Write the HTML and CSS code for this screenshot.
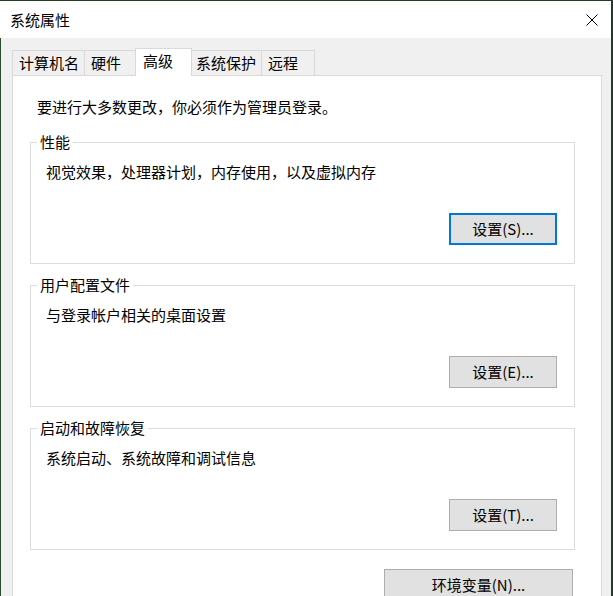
FILE: index.html
```html
<!DOCTYPE html>
<html lang="zh-CN">
<head>
<meta charset="utf-8">
<title>系统属性</title>
<link rel="stylesheet" href="styles.css">
</head>
<body>
<div class="window">
  <div class="titlebar">
    <span class="title">系统属性</span>
    <span class="close" aria-label="关闭">
      <svg width="12" height="12" viewBox="0 0 12 12"><path d="M0.5 0.5 L11.5 11.5 M11.5 0.5 L0.5 11.5" stroke="#000" stroke-width="1" fill="none"/></svg>
    </span>
  </div>
  <div class="client">
    <div class="tabs">
      <div class="tab">计算机名</div>
      <div class="tab">硬件</div>
      <div class="tab selected">高级</div>
      <div class="tab">系统保护</div>
      <div class="tab">远程</div>
    </div>
    <div class="panel">
      <p class="intro">要进行大多数更改，你必须作为管理员登录。</p>
      <fieldset class="group">
        <legend>性能</legend>
        <p class="desc">视觉效果，处理器计划，内存使用，以及虚拟内存</p>
        <div class="actions"><button class="btn focused">设置(S)...</button></div>
      </fieldset>
      <fieldset class="group">
        <legend>用户配置文件</legend>
        <p class="desc">与登录帐户相关的桌面设置</p>
        <div class="actions"><button class="btn">设置(E)...</button></div>
      </fieldset>
      <fieldset class="group">
        <legend>启动和故障恢复</legend>
        <p class="desc">系统启动、系统故障和调试信息</p>
        <div class="actions"><button class="btn">设置(T)...</button></div>
      </fieldset>
      <div class="env-row"><button class="btn wide">环境变量(N)...</button></div>
    </div>
  </div>
</div>
</body>
</html>
```
FILE: styles.css
```css
* { box-sizing: border-box; }
html, body {
  margin: 0;
  padding: 0;
  height: 100%;
  overflow: hidden;
}
body {
  background: #213d24;
  font-family: "Noto Sans CJK SC", "Noto Sans", sans-serif;
  font-size: 15px;
  color: #000;
}
.window {
  margin: 1px 2px 0 0;
  height: 595px;
  overflow: hidden;
  background: #f0f0f0;
  display: flex;
  flex-direction: column;
}
.titlebar {
  height: 37px;
  flex: none;
  background: #fff;
  display: flex;
  align-items: center;
  justify-content: space-between;
  padding: 0 13px 0 10px;
}
.title {
  line-height: 20px;
}
.close {
  display: flex;
  width: 12px;
  height: 12px;
}
.client {
  flex: 1;
  min-height: 0;
  border-left: 1px solid #2f4d32;
  padding-top: 12px;
  display: flex;
  flex-direction: column;
}
.tabs {
  display: flex;
  flex: none;
  align-items: flex-end;
  height: 25px;
  padding-left: 11px;
}
.tab {
  height: 25px;
  min-width: 54px;
  padding: 0 5px 0 6px;
  line-height: 24px;
  border: 1px solid #d9d9d9;
  border-bottom: none;
  background: #f0f0f0;
  white-space: nowrap;
  margin-left: -1px;
}
.tab:first-child { margin-left: 0; }
.tab.selected {
  position: relative;
  z-index: 2;
  height: 28px;
  margin: 0 -2px -1px -3px;
  padding: 0 7px 0 7px;
  min-width: 57px;
  line-height: 24px;
  background: #fff;
}
.panel {
  flex: none;
  margin-left: 11px;
  width: 590px;
  height: 600px;
  background: #fff;
  border: 1px solid #d9d9d9;
  padding: 21px 26px 0 17px;
}
.intro {
  margin: 0 0 0 7px;
  line-height: 20px;
}
.group {
  margin: 15px 0 0 0;
  padding: 10px 17px 18px 15px;
  border: 1px solid #dcdcdc;
  min-width: 0;
}
.group + .group { margin-top: 11px; }
.group legend {
  padding: 0 3px;
  margin-left: -9px;
  line-height: 20px;
}
.desc {
  margin: 0;
  line-height: 20px;
}
.actions {
  display: flex;
  justify-content: flex-end;
  margin-top: 31px;
}
.btn {
  font: inherit;
  color: #000;
  width: 108px;
  height: 32px;
  background: #e1e1e1;
  border: 1px solid #adadad;
  padding: 0;
  line-height: 20px;
  text-align: center;
}
.btn.focused {
  border: 2px solid #0078d7;
}
.env-row {
  display: flex;
  justify-content: flex-end;
  margin-top: 19px;
  padding-right: 2px;
}
.btn.wide { width: 189px; }
```
